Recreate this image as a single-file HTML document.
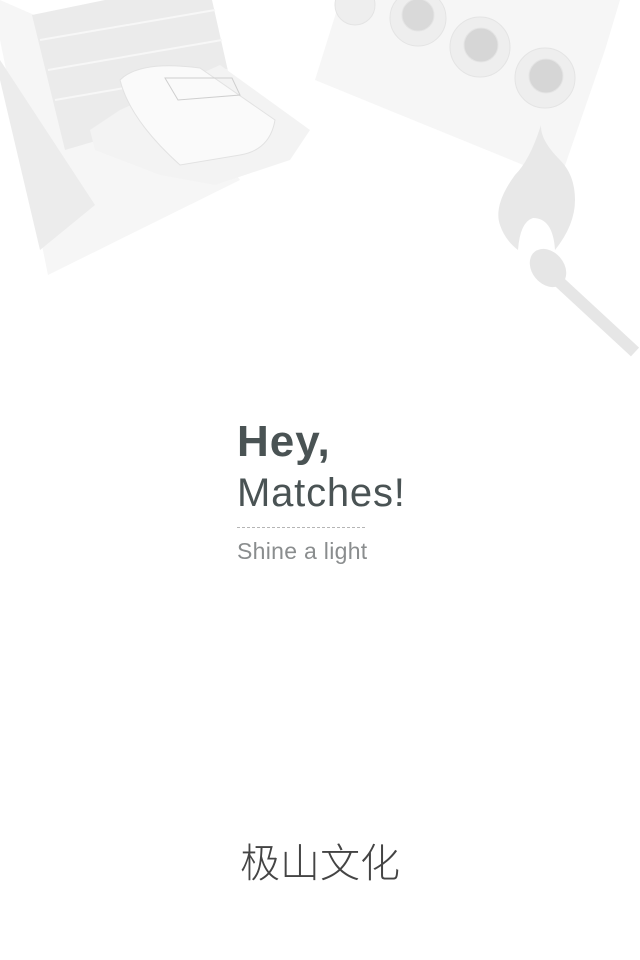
<!DOCTYPE html>
<html><head><meta charset="utf-8"><style>
html,body{margin:0;padding:0;background:#fff;}
body{width:640px;height:960px;position:relative;overflow:hidden;font-family:"Liberation Sans",sans-serif;}
.t{position:absolute;left:237px;color:#4a5354;}
</style></head><body>
<svg width="640" height="960" style="position:absolute;left:0;top:0">
  <polygon points="0,40 48,275 240,180 160,70 0,0" fill="#f6f6f6"/>
  <polygon points="0,80 40,250 95,205 0,60" fill="#ececec"/>
  <polygon points="32,15 105,0 212,0 230,80 150,125 65,150" fill="#ebebeb"/>
  <g stroke="#f7f7f7" stroke-width="2">
    <line x1="40" y1="40" x2="215" y2="10"/><line x1="48" y1="70" x2="222" y2="40"/><line x1="55" y1="100" x2="228" y2="70"/>
  </g>
  <polygon points="90,130 120,110 220,65 310,130 290,160 215,185 160,175 95,150" fill="#f3f3f3"/>
  <path d="M120,80 Q140,60 200,68 L275,120 Q270,150 240,155 L180,165 Q130,120 120,80 Z" fill="#fafafa" stroke="#e2e2e2"/>
  <polygon points="165,78 232,78 240,95 178,100" fill="none" stroke="#cfcfcf"/>
  <polygon points="340,0 620,0 605,50 560,180 315,80" fill="#f6f6f6"/>
  <g fill="#eeeeee" stroke="#e4e4e4">
    <circle cx="355" cy="5" r="20"/>
    <circle cx="418" cy="18" r="28"/><circle cx="418" cy="15" r="16" fill="#d9d9d9"/>
    <circle cx="480" cy="47" r="30"/><circle cx="481" cy="45" r="17" fill="#d6d6d6"/>
    <circle cx="545" cy="78" r="30"/><circle cx="546" cy="76" r="17" fill="#d6d6d6"/>
  </g>
  <path d="M541,125 Q530,160 515,175 Q493,205 500,225 Q505,240 518,250 Q520,222 533,218 Q553,218 555,250 Q575,225 575,200 Q575,175 560,160 Q540,140 541,125 Z" fill="#e8e8e8"/>
  <ellipse cx="548" cy="268" rx="16" ry="21" transform="rotate(-40 548 268)" fill="#e6e6e6"/>
  <line x1="555" y1="278" x2="635" y2="352" stroke="#e6e6e6" stroke-width="12"/>
</svg>
<div class="t" style="top:417px;font-size:44px;font-weight:bold;letter-spacing:1px;">Hey,</div>
<div class="t" style="top:471px;font-size:40px;font-weight:300;letter-spacing:0.8px;">Matches!</div>
<div style="position:absolute;left:237px;top:527px;width:128px;border-top:1px dashed #b5b5b5;"></div>
<div class="t" style="top:538px;font-size:23px;color:#8a8d8e;letter-spacing:0.3px;">Shine a light</div>
<div style="position:absolute;left:240px;top:831px;font-size:40px;color:#444;font-family:'Liberation Sans','Noto Sans CJK SC',sans-serif;font-weight:300;">极山文化</div>
</body></html>
